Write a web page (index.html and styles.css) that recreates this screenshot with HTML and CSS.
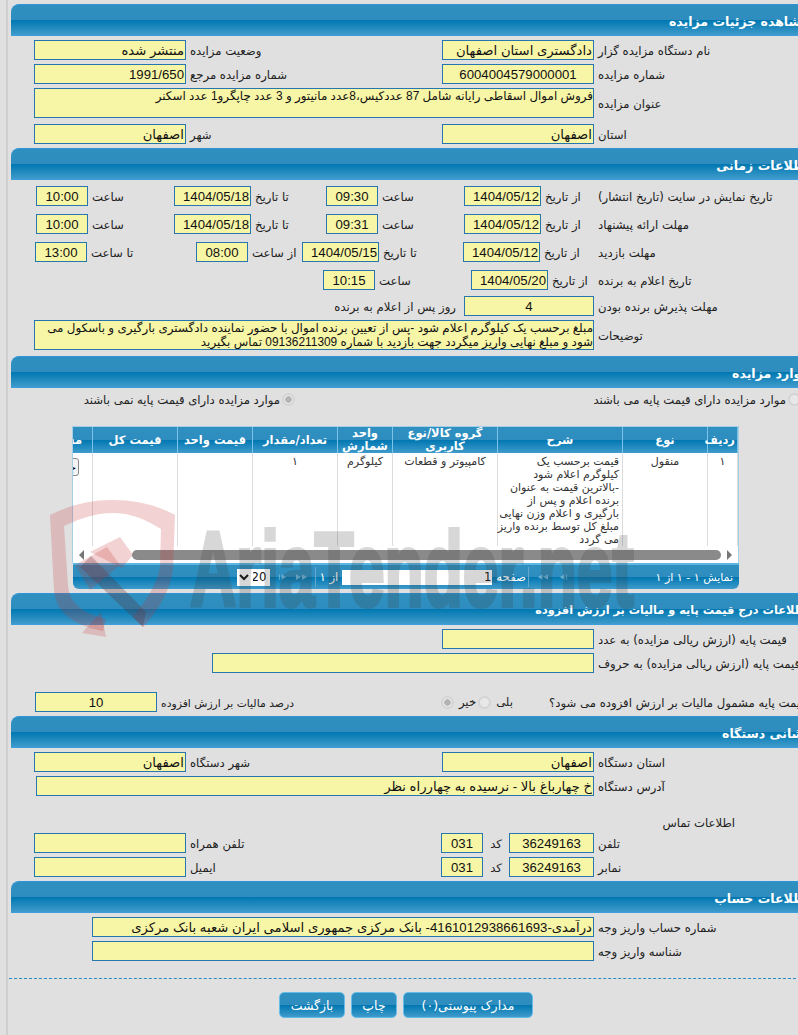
FILE: index.html
```html
<!DOCTYPE html>
<html lang="fa">
<head>
<meta charset="utf-8">
<title>مشاهده جزئیات مزایده</title>
<link rel="stylesheet" href="styles.css">
</head>
<body>
<div class="page" dir="rtl">

  <h2 class="bar">مشاهده جزئیات مزایده</h2>
  <div class="fields">
    <div class="row g-two">
      <label>نام دستگاه مزایده گزار</label><input class="in" readonly value="دادگستری استان اصفهان">
      <label>وضعیت مزایده</label><input class="in" readonly value="منتشر شده">
    </div>
    <div class="row g-two">
      <label>شماره مزایده</label><input class="in mid" readonly value="6004004579000001">
      <label>شماره مزایده مرجع</label><input class="in" readonly value="1991/650">
    </div>
    <div class="row tall g-wide">
      <label>عنوان مزایده</label>
      <textarea class="in area" readonly>فروش اموال اسقاطی رایانه شامل 87 عددکیس،8عدد مانیتور و 3 عدد چاپگرو1 عدد اسکنر</textarea>
    </div>
    <div class="row g-two after-tall">
      <label>استان</label><input class="in" readonly value="اصفهان">
      <label>شهر</label><input class="in" readonly value="اصفهان">
    </div>
  </div>

  <h2 class="bar">اطلاعات زمانی</h2>
  <div class="fields time">
    <div class="row g-time">
      <label>تاریخ نمایش در سایت (تاریخ انتشار)</label><label>از تاریخ</label><input class="in" readonly value="1404/05/12">
      <label>ساعت</label><input class="in mid" readonly value="09:30">
      <label>تا تاریخ</label><input class="in" readonly value="1404/05/18">
      <label>ساعت</label><input class="in mid" readonly value="10:00">
    </div>
    <div class="row g-time">
      <label>مهلت ارائه پیشنهاد</label><label>از تاریخ</label><input class="in" readonly value="1404/05/12">
      <label>ساعت</label><input class="in mid" readonly value="09:31">
      <label>تا تاریخ</label><input class="in" readonly value="1404/05/18">
      <label>ساعت</label><input class="in mid" readonly value="10:00">
    </div>
    <div class="row g-visit">
      <label>مهلت بازدید</label><label>از تاریخ</label><input class="in" readonly value="1404/05/12">
      <label>تا تاریخ</label><input class="in" readonly value="1404/05/15">
      <label>از ساعت</label><input class="in mid" readonly value="08:00">
      <label>تا ساعت</label><input class="in mid" readonly value="13:00">
    </div>
    <div class="row g-win">
      <label>تاریخ اعلام به برنده</label><label>از تاریخ</label><input class="in" readonly value="1404/05/20">
      <label>ساعت</label><input class="in mid" readonly value="10:15">
    </div>
    <div class="row g-accept near">
      <label>مهلت پذیرش برنده بودن</label><input class="in mid" readonly value="4">
      <label class="flow">روز پس از اعلام به برنده</label>
    </div>
    <div class="row tall g-wide closest">
      <label>توضیحات</label>
      <textarea class="in area" readonly>مبلغ برحسب یک کیلوگرم اعلام شود -پس از تعیین برنده اموال با حضور نماینده دادگستری بارگیری و باسکول می شود و مبلغ نهایی واریز میگردد جهت بازدید با شماره 09136211309 تماس بگیرید</textarea>
    </div>
  </div>

  <h2 class="bar">موارد مزایده</h2>
  <div class="choice">
    <label class="pick"><input class="radio" type="radio" name="base" disabled>موارد مزایده دارای قیمت پایه می باشند</label>
    <label class="pick"><input class="radio" type="radio" name="base" disabled checked>موارد مزایده دارای قیمت پایه نمی باشند</label>
  </div>

  <div class="grid-box">
    <div class="grid-clip">
      <table class="grid">
        <colgroup>
          <col class="c1"><col class="c2"><col class="c3"><col class="c4"><col class="c5"><col class="c6"><col class="c7"><col class="c8"><col class="c9">
        </colgroup>
        <thead>
          <tr>
            <th>ردیف</th><th>نوع</th><th>شرح</th><th>گروه کالا/نوع کاربری</th><th>واحد شمارش</th><th>تعداد/مقدار</th><th>قیمت واحد</th><th>قیمت کل</th><th class="last">مشاهده</th>
          </tr>
        </thead>
        <tbody>
          <tr>
            <td>۱</td>
            <td>منقول</td>
            <td class="desc">قیمت برحسب یک<br>کیلوگرم اعلام شود<br>-بالاترین قیمت به عنوان<br>برنده اعلام و پس از<br>بارگیری و اعلام وزن نهایی<br>مبلغ کل توسط برنده واریز<br>می گردد</td>
            <td>کامپیوتر و قطعات</td>
            <td>کیلوگرم</td>
            <td>۱</td>
            <td></td>
            <td></td>
            <td class="last"><button class="mini" type="button">جزئیات</button></td>
          </tr>
        </tbody>
      </table>
    </div>
    <div class="scroll">
      <span class="arrow right"></span>
      <span class="thumb"></span>
      <span class="arrow left"></span>
    </div>
    <div class="pager">
      <span class="info">نمایش ۱ - ۱ از ۱</span>
      <div class="nav">
        <svg class="ico" width="9" height="8" viewBox="0 0 10 8"><path d="M1 4 6 1v6zM8 1h1v6H8z"/></svg>
        <svg class="ico gap-big" width="10" height="8" viewBox="0 0 11 8"><path d="M0 4 5 1v6zM6 4l5-3v6z"/></svg>
        <span class="sep first"></span>
        <span>صفحه</span>
        <input class="page-in" readonly value="1">
        <span>از ۱</span>
        <span class="sep second"></span>
        <svg class="ico" width="11" height="8" viewBox="0 0 11 8"><path d="M11 4 6 1v6zM5 4 0 1v6z"/></svg>
        <svg class="ico gap-mid" width="9" height="8" viewBox="0 0 10 8"><path d="M9 4 4 1v6zM1 1h1v6H1z"/></svg>
        <select class="size"><option>20</option></select>
      </div>
    </div>
  </div>

  <h2 class="bar long">اطلاعات درج قیمت پایه و مالیات بر ارزش افزوده</h2>
  <div class="fields">
    <div class="row g-num">
      <label>قیمت پایه (ارزش ریالی مزایده) به عدد</label><input class="in" readonly>
    </div>
    <div class="row g-words">
      <label>قیمت پایه (ارزش ریالی مزایده) به حروف</label><input class="in" readonly>
    </div>
    <div class="row g-tax spaced">
      <label>قیمت پایه مشمول مالیات بر ارزش افزوده می شود؟</label>
      <div class="yes-no">
        <span>بلی</span><input class="radio" type="radio" name="tax" disabled>
        <span class="no">خیر</span><input class="radio" type="radio" name="tax" disabled checked>
      </div>
      <label class="tight">درصد مالیات بر ارزش افزوده</label><input class="in mid" readonly value="10">
    </div>
  </div>

  <h2 class="bar">نشانی دستگاه</h2>
  <div class="fields">
    <div class="row g-two">
      <label>استان دستگاه</label><input class="in" readonly value="اصفهان">
      <label>شهر دستگاه</label><input class="in" readonly value="اصفهان">
    </div>
    <div class="row g-addr">
      <label>آدرس دستگاه</label><input class="in" readonly value="خ چهارباغ بالا - نرسیده به چهارراه نظر">
    </div>
    <div class="contact-title">اطلاعات تماس</div>
    <div class="row g-phone">
      <label>تلفن</label><input class="in mid" readonly value="36249163">
      <label class="center">کد</label><input class="in mid" readonly value="031">
      <label>تلفن همراه</label><input class="in" readonly>
    </div>
    <div class="row g-phone">
      <label>نمابر</label><input class="in mid" readonly value="36249163">
      <label class="center">کد</label><input class="in mid" readonly value="031">
      <label>ایمیل</label><input class="in" readonly>
    </div>
  </div>

  <h2 class="bar">اطلاعات حساب</h2>
  <div class="fields">
    <div class="row g-account">
      <label>شماره حساب واریز وجه</label><input class="in" readonly value="درآمدی-4161012938661693- بانک مرکزی جمهوری اسلامی ایران شعبه بانک مرکزی">
    </div>
    <div class="row g-account">
      <label>شناسه واریز وجه</label><input class="in" readonly>
    </div>
  </div>

  <div class="actions">
    <button class="btn attach" type="button">مدارک پیوستی(۰)</button>
    <button class="btn print" type="button">چاپ</button>
    <button class="btn back" type="button">بازگشت</button>
  </div>
</div>

<div class="watermark" dir="ltr" aria-hidden="true">
  <svg class="shield" width="140" height="150" viewBox="0 0 140 150">
    <path class="red" d="M5 20C25 10 45 5 68 5c22 0 44 5 62 15l-2 55c-3 20-14 40-30 57l-10-10c12-15 24-32 27-50l1-38C100 24 85 18 68 18 50 18 34 24 19 31l4 60c2 18 15 27 38 33l-3 12C28 130 11 118 9 95z"/>
    <path class="red" d="M37 138l24 4-5-25z"/>
    <path class="dark" d="M35 72l11-11 55 56-3 15z"/>
    <path class="red" d="M45 57 75 42 88 60 77 73z"/>
    <path class="red" d="M30 70 62 52 75 70 45 95z"/>
  </svg>
  <span class="brand">AriaTender.net</span>
</div>
</body>
</html>
```

FILE: styles.css
```css
html, body {
  margin: 0;
  padding: 0;
  height: 1035px;
  overflow: hidden;
  background: #e0e0e0;
}
body {
  position: relative;
  font-family: "DejaVu Sans", sans-serif;
  font-size: 11.7px;
  color: #222;
}
.page {
  box-sizing: border-box;
  width: 805px;
  height: 1035px;
  margin-left: 6px;
  border-left: 2px solid #cfcfcf;
  padding: 4px 0 0 3px;
}
.bar {
  box-sizing: border-box;
  height: 32px;
  margin: 0;
  padding-right: 2px;
  border-top: 1px solid #2f95d8;
  border-bottom: 1px solid #3c9fdc;
  border-top-left-radius: 8px;
  background: linear-gradient(#2f90c0 0, #2e8dbe 49%, #0077b1 50%, #3f9bcb 100%);
  color: #fff;
  font-size: 12.5px;
  font-weight: bold;
  line-height: 34px;
  white-space: nowrap;
}
.bar.long { font-size: 11.3px; }
.fields {
  display: flex;
  flex-direction: column;
  padding-top: 4px;
  padding-bottom: 4px;
  gap: 4px;
}
.row {
  display: grid;
  height: 20px;
  align-items: center;
}
.row.tall { height: 30px; }
.row.after-tall { margin-top: 2px; }
.row label {
  text-align: left;
  padding: 2px 0 0 4px;
  white-space: nowrap;
}
.row label.flow { text-align: right; padding: 2px 8px 0 0; }
.row label.center { text-align: center; padding: 2px 0 0; }
.row label.tight { font-size: 10.8px; }
.in {
  box-sizing: border-box;
  width: 100%;
  height: 20px;
  margin: 0;
  padding: 0 1px;
  border: 1px solid #2577ae;
  border-radius: 0;
  background: #f7f5a6;
  font-family: "Liberation Sans", "DejaVu Sans", sans-serif;
  font-size: 13.2px;
  color: #111;
  outline: none;
}
.in.mid { text-align: center; }
.in.area {
  height: 30px;
  padding: 0;
  resize: none;
  overflow: hidden;
  font-size: 11.9px;
  line-height: 14px;
}
.g-two { grid-template-columns: 217px 152px 256px 152px; }
.g-wide { grid-template-columns: 217px 560px; }
.g-time { grid-template-columns: 217px 53px 77px 86px 52px 75px 77px 86px 52px; }
.g-visit { grid-template-columns: 217px 54px 77px 84px 77px 54px 52px 109px 52px; }
.g-win { grid-template-columns: 217px 46px 77px 96px 52px; }
.g-accept { grid-template-columns: 217px 130px 240px; }
.g-num { grid-template-columns: 217px 152px; }
.g-words { grid-template-columns: 217px 382px; }
.g-tax { grid-template-columns: 266px 250px 138px 122px; }
.g-addr { grid-template-columns: 217px 558px; }
.g-phone { grid-template-columns: 217px 85px 26px 42px 255px 152px; }
.g-account { grid-template-columns: 217px 502px; }

.time { padding-top: 6px; padding-bottom: 6px; gap: 8px; }
.near { margin-top: -2px; }
.closest { margin-top: -4px; }
.spaced { margin-top: 15px; }

.choice {
  display: grid;
  grid-template-columns: 516px 240px;
  height: 38px;
  padding-top: 5px;
  box-sizing: border-box;
}
.pick {
  display: flex;
  align-items: flex-start;
  gap: 2px;
  line-height: 14px;
  white-space: nowrap;
  padding-right: 10px;
}
.choice .pick + .pick { padding-right: 0; }
.radio {
  appearance: none;
  box-sizing: border-box;
  flex: none;
  width: 13px;
  height: 13px;
  margin: 0;
  border: 2px solid #d4d4d4;
  border-radius: 50%;
  background: #e8e8e8;
}
.radio:checked {
  background: radial-gradient(circle, #b4b4b4 0 3px, #e8e8e8 3.5px);
}

.grid-box {
  box-sizing: border-box;
  width: 667px;
  margin-right: 72px;
  height: 167px;
}
.grid-clip {
  height: 119px;
  overflow: hidden;
  background: #fff;
  border-left: 1px solid #a5cfe6;
  border-right: 1px solid #a5cfe6;
  border-top: 1px solid #a5cfe6;
}
.grid {
  table-layout: fixed;
  width: 725px;
  border-collapse: collapse;
  font-size: 11px;
}
.c1 { width: 30px; }
.c2 { width: 85px; }
.c3 { width: 125px; }
.c4 { width: 105px; }
.c5 { width: 55px; }
.c6 { width: 85px; }
.c7 { width: 75px; }
.c8 { width: 85px; }
.c9 { width: 80px; }
.grid th {
  height: 26px;
  padding: 0 2px;
  border-right: 1px solid #7cc3ea;
  border-left: 1px solid #7cc3ea;
  background: linear-gradient(#2f90c0 0, #2e8dbe 49%, #0077b1 50%, #3f9bcb 100%);
  color: #fff;
  font-size: 11.5px;
  font-weight: bold;
  line-height: 13px;
  text-align: center;
}
.grid td {
  box-sizing: border-box;
  height: 92px;
  padding: 2px 3px 0;
  border-right: 1px solid #dcdcdc;
  border-left: 1px solid #dcdcdc;
  border-bottom: 1px solid #dcdcdc;
  color: #333;
  line-height: 13px;
  text-align: center;
  vertical-align: top;
}
.grid td.desc { text-align: right; white-space: nowrap; }
.grid th.last { text-align: right; padding-right: 10px; }
.grid td.last { text-align: right; padding: 5px 13px 0 0; }
.mini {
  box-sizing: border-box;
  height: 18px;
  padding: 0 2px;
  border: 1px solid #888;
  border-radius: 3px;
  background: #f4f4f4;
  font: inherit;
}
.scroll {
  box-sizing: border-box;
  display: flex;
  align-items: center;
  height: 17px;
  padding: 0 6px;
  background: #fff;
  border-left: 1px solid #a5cfe6;
  border-right: 1px solid #a5cfe6;
}
.thumb {
  flex: none;
  width: 589px;
  height: 10px;
  margin: 0 6px 0 0;
  border-radius: 5px;
  background: #8a8a8a;
}
.arrow {
  flex: none;
  width: 0;
  height: 0;
  border-top: 5px solid transparent;
  border-bottom: 5px solid transparent;
}
.arrow.right { border-left: 5px solid #777; }
.arrow.left { border-right: 5px solid #777; margin-right: auto; }
.pager {
  box-sizing: border-box;
  display: flex;
  align-items: center;
  height: 26px;
  margin-left: 1px;
  padding-right: 6px;
  border-top: 2px solid #5cb6e2;
  border-radius: 0 0 6px 6px;
  background: linear-gradient(#2f90c0 0, #2e8dbe 49%, #0077b1 50%, #3f9bcb 100%);
  color: #fff;
}
.info { flex: none; width: 75px; white-space: nowrap; font-size: 11px; }
.nav {
  display: flex;
  align-items: center;
  gap: 4px;
  margin-right: 90px;
  white-space: nowrap;
}
.ico { fill: #6cb4d8; flex: none; }
.ico.gap-big { margin-right: 7px; }
.ico.gap-mid { margin-right: 5px; }
.sep { flex: none; width: 1px; height: 20px; background: #64a9cc; }
.sep.first { margin: 0 5px 0 -2px; }
.sep.second { margin: 0 -1px 0 4px; }
.page-in {
  box-sizing: border-box;
  width: 150px;
  height: 15px;
  margin: 0;
  padding: 0 1px;
  border: 0;
  background: #fff;
  font: inherit;
  color: #111;
}
.size {
  box-sizing: border-box;
  width: 33px;
  height: 17px;
  margin: 0 4px 0 0;
  padding: 0;
  border: 0;
  background: #fff;
  font: inherit;
  color: #111;
}

.yes-no {
  display: flex;
  align-items: center;
  gap: 5px;
  padding-right: 32px;
}
.yes-no .no { margin-right: -3px; }
.contact-title {
  box-sizing: border-box;
  height: 33px;
  margin-bottom: -4px;
  padding: 16px 76px 0 0;
}

.actions {
  display: flex;
  gap: 6px;
  margin: 13px 0 0 -2px;
  padding: 13px 278px 0 0;
  border-top: 1px dashed #2a8ac4;
}
.btn {
  box-sizing: border-box;
  height: 26px;
  padding: 0;
  border: 1px solid #66bce8;
  border-radius: 5px;
  background: linear-gradient(#2f90c0 0, #2e8dbe 49%, #0077b1 50%, #3f9bcb 100%);
  color: #fff;
  font-family: inherit;
  font-size: 12.5px;
}
.attach { width: 130px; }
.print { width: 46px; }
.back { width: 66px; }

.watermark {
  position: absolute;
  left: 0;
  top: 0;
  width: 798px;
  height: 1035px;
  pointer-events: none;
}
.shield {
  position: absolute;
  left: 45px;
  top: 495px;
}
.red { fill: rgba(195, 50, 50, .22); }
.dark { fill: rgba(90, 50, 60, .3); }
.brand {
  position: absolute;
  left: 190px;
  top: 510px;
  font-family: "Liberation Sans", sans-serif;
  font-size: 105px;
  font-weight: bold;
  line-height: 120px;
  white-space: nowrap;
  color: #3c3c3c;
  -webkit-text-stroke: 4px #3c3c3c;
  opacity: .2;
  transform: scaleX(.61);
  transform-origin: left top;
}
```
